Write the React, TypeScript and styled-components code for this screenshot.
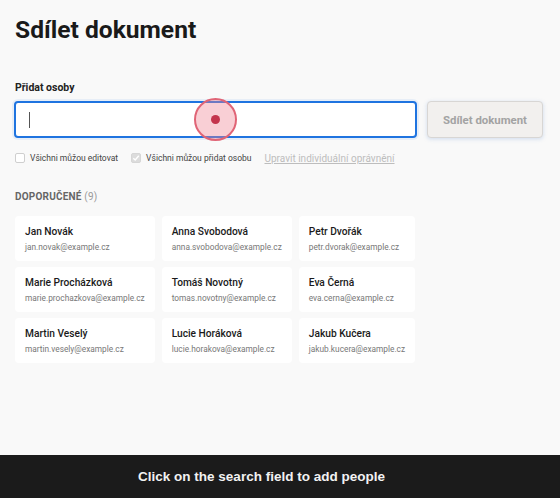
import React from "react";
import styled, { createGlobalStyle } from "styled-components";

const Global = createGlobalStyle`
  html, body { margin: 0; padding: 0; height: 100%; }
  body { background: #f9f9f9; font-family: Roboto, "Noto Sans", sans-serif; color: #1a1a1a; }
  #root { min-height: 100vh; display: flex; flex-direction: column; }
`;

const Page = styled.div`
  flex: 1;
  display: flex;
  flex-direction: column;
  min-height: 100vh;
`;

const Main = styled.main`
  flex: 1;
  padding: 15px 15px 0 15px;
`;

const Title = styled.h1`
  margin: 0;
  font-size: 24.6px;
  line-height: 30px;
  font-weight: 700;
  color: #1a1a1a;
`;

const FieldLabel = styled.div`
  margin-top: 36px;
  font-size: 10.5px;
  line-height: 14px;
  font-weight: 700;
  color: #222;
`;

const InputRow = styled.div`
  margin-top: 6px;
  display: flex;
  gap: 10px;
  margin-left: -1px;
`;

const InputWrap = styled.div`
  position: relative;
  width: 403px;
  height: 37px;
  box-sizing: border-box;
  border: 2px solid #1f74e0;
  border-radius: 4px;
  background: #fff;
  box-shadow: 0 0 0 2px rgba(31, 116, 224, 0.08);
`;

const Caret = styled.span`
  position: absolute;
  left: 13px;
  top: 9px;
  width: 1px;
  height: 16px;
  background: #555;
`;

const TouchMark = styled.span`
  position: absolute;
  left: 178px;
  top: -5px;
  width: 39px;
  height: 39px;
  border-radius: 50%;
  border: 2px solid #e06476;
  background: rgba(240, 130, 145, 0.38);
  display: flex;
  align-items: center;
  justify-content: center;
  &::after {
    content: "";
    width: 9px;
    height: 9px;
    border-radius: 50%;
    background: #c4354d;
  }
`;

const ShareButton = styled.button`
  width: 116px;
  height: 37px;
  box-sizing: border-box;
  border: 1px solid #d8d6d4;
  border-radius: 4px;
  background: #f2f0ee;
  color: #a3a3a3;
  font-family: Roboto, "Noto Sans", sans-serif;
  font-size: 11.4px;
  font-weight: 700;
  box-shadow: 0 1px 4px rgba(110, 150, 210, 0.3);
  padding: 0;
`;

const OptionsRow = styled.div`
  margin-top: 13px;
  display: flex;
  align-items: center;
  gap: 13px;
  height: 14px;
`;

const Option = styled.label`
  display: flex;
  align-items: center;
  gap: 5px;
  font-size: 8.5px;
  color: #444;
`;

const Box = styled.span<{ $checked?: boolean }>`
  width: 10px;
  height: 10px;
  box-sizing: border-box;
  border-radius: 2px;
  border: 1px solid ${(p) => (p.$checked ? "#d6d6d6" : "#cfcfcf")};
  background: ${(p) => (p.$checked ? "#dcdcdc" : "#fff")};
  display: flex;
  align-items: center;
  justify-content: center;
`;

const Link = styled.a`
  font-size: 10px;
  color: #bdbdbd;
  text-decoration: underline;
`;

const SectionHead = styled.div`
  margin-top: 25px;
  font-size: 10px;
  line-height: 14px;
  font-weight: 700;
  letter-spacing: 0.2px;
  color: #666;
  text-transform: uppercase;
`;

const Count = styled.span`
  font-weight: 400;
  color: #9a9a9a;
`;

const Grid = styled.div`
  margin-top: 12px;
  display: grid;
  grid-template-columns: repeat(3, max-content);
  column-gap: 7px;
  row-gap: 6px;
`;

const Card = styled.div`
  background: #fff;
  border-radius: 4px;
  padding: 9px 10px 8px 10px;
  height: 45px;
  box-sizing: border-box;
`;

const Name = styled.div`
  font-size: 10.2px;
  line-height: 14px;
  font-weight: 500;
  color: #1a1a1a;
`;

const Email = styled.div`
  margin-top: 2px;
  font-size: 8.3px;
  line-height: 12px;
  color: #777;
`;

const Banner = styled.div`
  height: 43px;
  background: #1b1b1b;
  color: #f2f2f2;
  display: flex;
  align-items: center;
  justify-content: center;
  padding-right: 37px;
  font-family: "Liberation Sans", Arial, sans-serif;
  font-weight: 700;
  font-size: 13.5px;
`;

const people = [
  ["Jan Novák", "jan.novak@example.cz"],
  ["Anna Svobodová", "anna.svobodova@example.cz"],
  ["Petr Dvořák", "petr.dvorak@example.cz"],
  ["Marie Procházková", "marie.prochazkova@example.cz"],
  ["Tomáš Novotný", "tomas.novotny@example.cz"],
  ["Eva Černá", "eva.cerna@example.cz"],
  ["Martin Veselý", "martin.vesely@example.cz"],
  ["Lucie Horáková", "lucie.horakova@example.cz"],
  ["Jakub Kučera", "jakub.kucera@example.cz"],
];

export default function App() {
  return (
    <Page>
      <Global />
      <Main>
        <Title>Sdílet dokument</Title>
        <FieldLabel>Přidat osoby</FieldLabel>
        <InputRow>
          <InputWrap>
            <Caret />
            <TouchMark />
          </InputWrap>
          <ShareButton>Sdílet dokument</ShareButton>
        </InputRow>
        <OptionsRow>
          <Option>
            <Box />
            Všichni můžou editovat
          </Option>
          <Option>
            <Box $checked>
              <svg width="8" height="8" viewBox="0 0 8 8">
                <path d="M1.3 4.2 L3.2 6 L6.8 1.8" fill="none" stroke="#fff" strokeWidth="1.4" />
              </svg>
            </Box>
            Všichni můžou přidat osobu
          </Option>
          <Link>Upravit individuální oprávnění</Link>
        </OptionsRow>
        <SectionHead>
          Doporučené <Count>(9)</Count>
        </SectionHead>
        <Grid>
          {people.map(([n, e]) => (
            <Card key={e}>
              <Name>{n}</Name>
              <Email>{e}</Email>
            </Card>
          ))}
        </Grid>
      </Main>
      <Banner>Click on the search field to add people</Banner>
    </Page>
  );
}
